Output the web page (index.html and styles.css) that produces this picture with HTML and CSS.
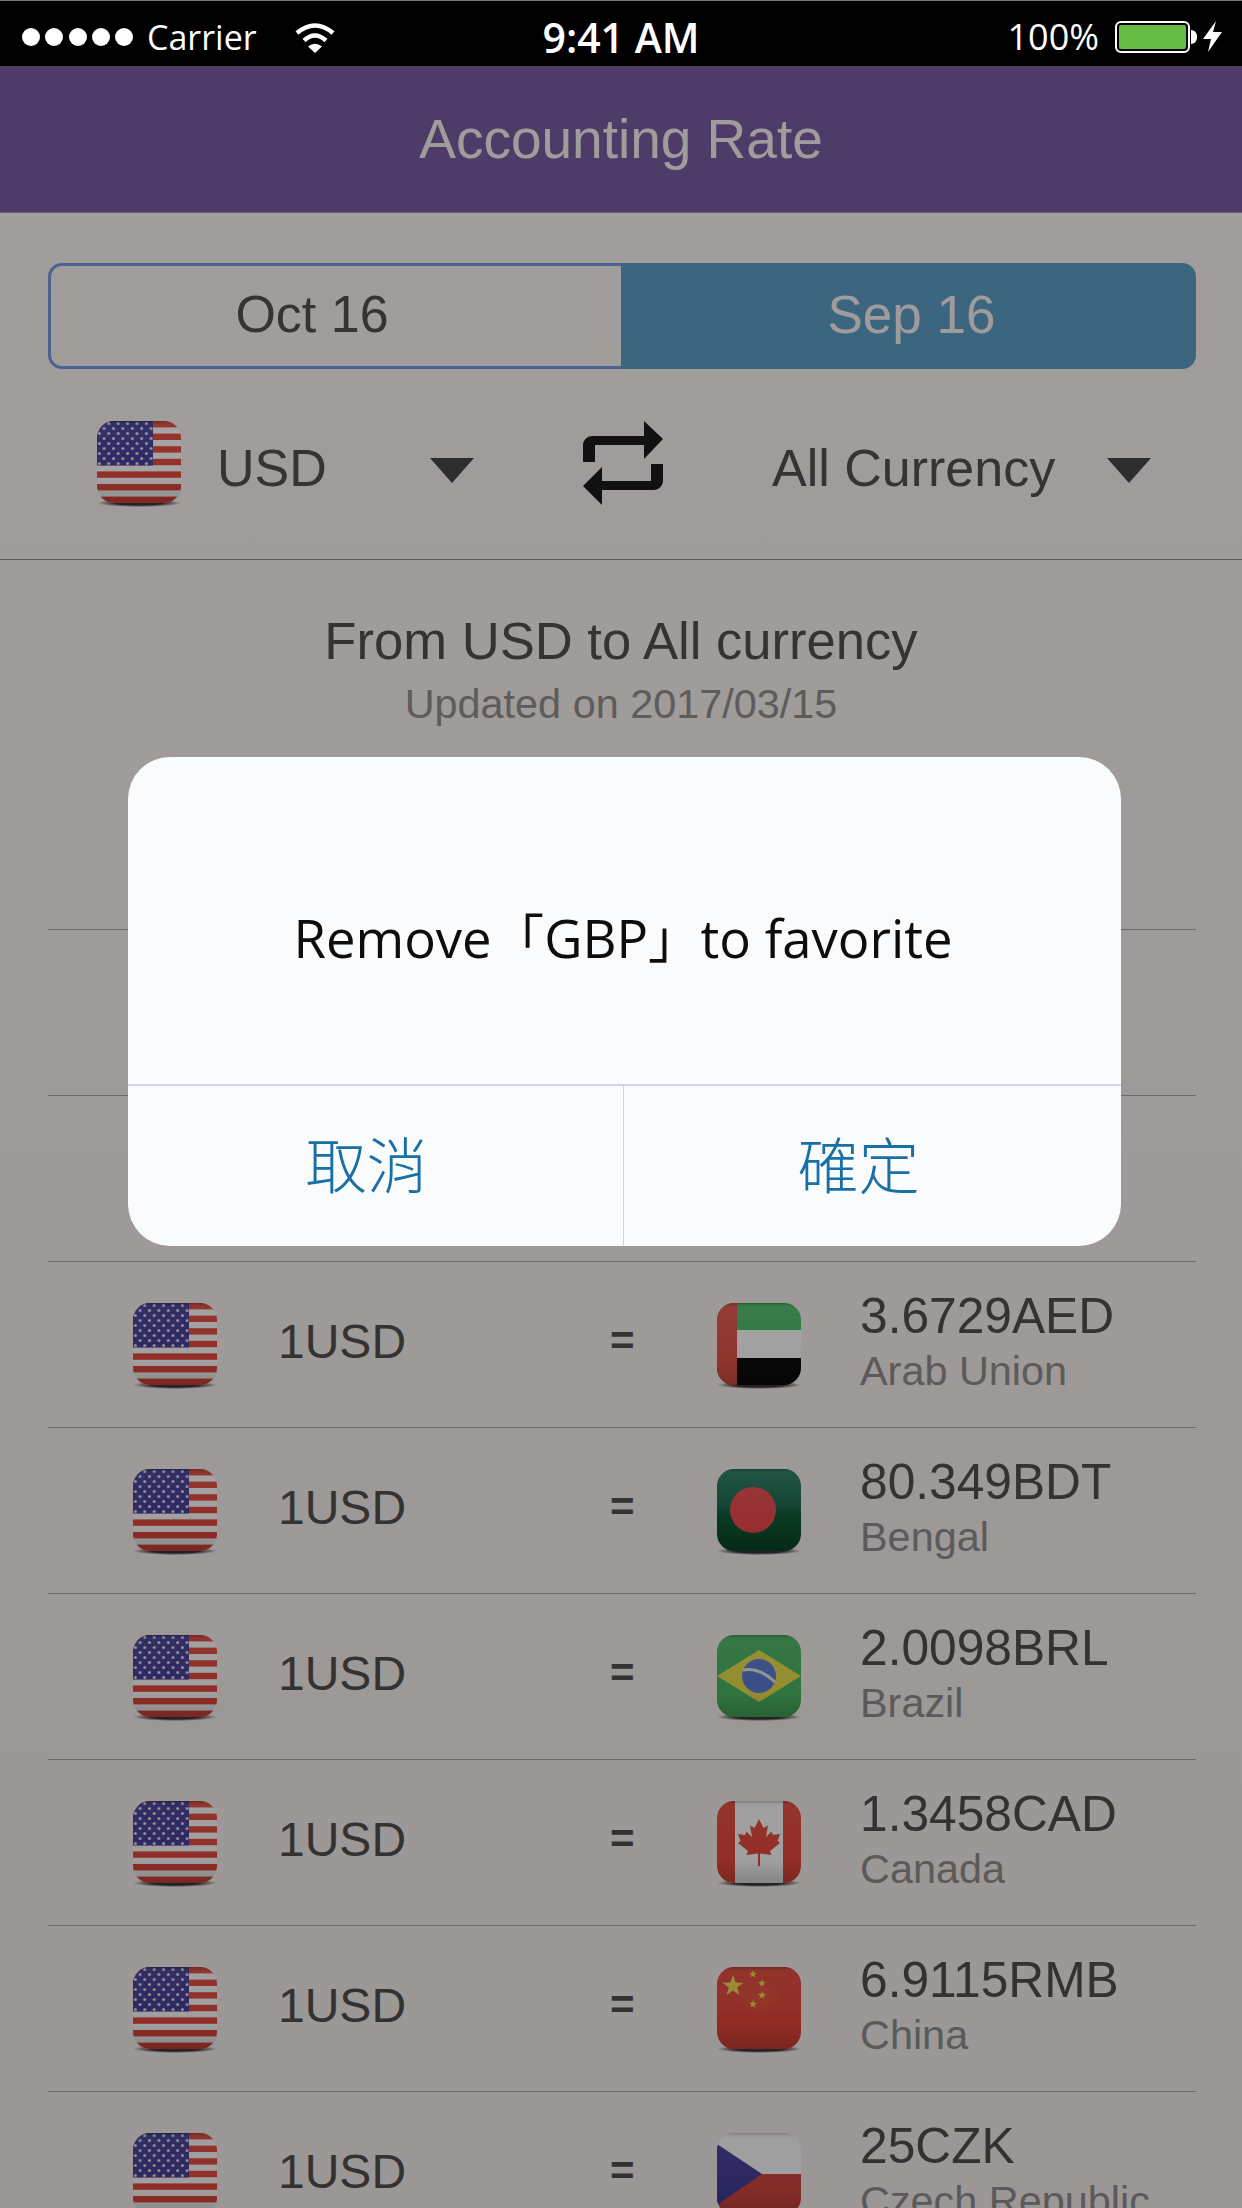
FILE: index.html
```html
<!DOCTYPE html>
<html lang="en">
<head>
  <meta charset="UTF-8">
  <meta name="viewport" content="width=device-width, initial-scale=1.0">
  <title>Accounting Rate</title>
  <link rel="stylesheet" href="styles.css">
</head>
<body>
  <!-- flags, used by every row -->
  <svg class="flag-defs" xmlns="http://www.w3.org/2000/svg">
    <defs>
      <clipPath id="flag-clip"><rect width="84" height="82" rx="17"/></clipPath>
      <linearGradient id="gloss" x1="0" y1="0" x2="0" y2="1">
        <stop offset="0" stop-color="#000" stop-opacity=".22"/>
        <stop offset=".06" stop-color="#fff" stop-opacity=".06"/>
        <stop offset=".5" stop-color="#fff" stop-opacity=".02"/>
        <stop offset=".7" stop-color="#000" stop-opacity="0"/>
        <stop offset="1" stop-color="#000" stop-opacity=".16"/>
      </linearGradient>
      <radialGradient id="shadow-fade">
        <stop offset=".55" stop-color="#222" stop-opacity=".9"/>
        <stop offset="1" stop-color="#222" stop-opacity="0"/>
      </radialGradient>
      <linearGradient id="bd-green" x1="0" y1="0" x2="0" y2="1">
        <stop offset="0" stop-color="#2a7d62"/>
        <stop offset=".45" stop-color="#1c6a4c"/>
        <stop offset=".58" stop-color="#0c5a34"/>
        <stop offset="1" stop-color="#0a4f2c"/>
      </linearGradient>
      <radialGradient id="cn-glow">
        <stop offset="0" stop-color="#ee6a3c" stop-opacity=".45"/>
        <stop offset="1" stop-color="#ee6a3c" stop-opacity="0"/>
      </radialGradient>
      <pattern id="us-stars" width="9.4" height="10" patternUnits="userSpaceOnUse">
        <circle cx="2.4" cy="2.6" r="1.5" fill="#e8e6ee"/>
        <circle cx="7.1" cy="7.6" r="1.5" fill="#e8e6ee"/>
      </pattern>
      <symbol id="flag-shadow" viewBox="0 0 84 86">
        <ellipse cx="42" cy="82" rx="42" ry="4" fill="url(#shadow-fade)"/>
      </symbol>
      <symbol id="flag-us" viewBox="0 0 84 86">
        <use href="#flag-shadow"/>
        <g clip-path="url(#flag-clip)">
          <rect width="84" height="82" fill="#fff"/>
          <g fill="#e5483f">
            <rect y="0" width="84" height="6.4"/>
            <rect y="12.6" width="84" height="6.4"/>
            <rect y="25.2" width="84" height="6.4"/>
            <rect y="37.8" width="84" height="6.4"/>
            <rect y="50.4" width="84" height="6.4"/>
            <rect y="63" width="84" height="6.4"/>
            <rect y="75.6" width="84" height="6.4"/>
          </g>
          <rect width="56" height="44.5" fill="#453e9a"/>
          <rect width="56" height="44.5" fill="url(#us-stars)"/>
          <rect width="84" height="82" fill="url(#gloss)"/>
        </g>
      </symbol>
      <symbol id="flag-ae" viewBox="0 0 84 86">
        <use href="#flag-shadow"/>
        <g clip-path="url(#flag-clip)">
          <rect width="84" height="27" fill="#4dc06c"/>
          <rect y="27" width="84" height="28" fill="#fff"/>
          <rect y="55" width="84" height="27" fill="#0c0c0c"/>
          <rect width="20" height="82" fill="#e5534a"/>
          <rect width="84" height="82" fill="url(#gloss)"/>
        </g>
      </symbol>
      <symbol id="flag-bd" viewBox="0 0 84 86">
        <use href="#flag-shadow"/>
        <g clip-path="url(#flag-clip)">
          <rect width="84" height="82" fill="url(#bd-green)"/>
          <circle cx="36" cy="41" r="23" fill="#f04a50"/>
          <rect width="84" height="82" fill="url(#gloss)"/>
        </g>
      </symbol>
      <symbol id="flag-br" viewBox="0 0 84 86">
        <use href="#flag-shadow"/>
        <g clip-path="url(#flag-clip)">
          <rect width="84" height="82" fill="#4bb863"/>
          <polygon points="0,41 42,15 84,41 42,67" fill="#ebe04b"/>
          <circle cx="42" cy="41" r="17" fill="#5c7bd7"/>
          <path d="M26 35 Q42 32 58 47" fill="none" stroke="#e8ecef" stroke-width="3"/>
          <rect width="84" height="82" fill="url(#gloss)"/>
        </g>
      </symbol>
      <symbol id="flag-ca" viewBox="0 0 84 86">
        <use href="#flag-shadow"/>
        <g clip-path="url(#flag-clip)">
          <rect width="84" height="82" fill="#fff"/>
          <rect width="18" height="82" fill="#e9493c"/>
          <rect x="66" width="18" height="82" fill="#e9493c"/>
          <path fill="#e9493c" d="M42 18 L46.5 27 L51 24.5 L49 36 L54.5 30.5 L56 34 L63 33 L60.5 40 L63 42 L53 50 L54.5 54 L43 52.5 L43 65 L41 65 L41 52.5 L29.5 54 L31 50 L21 42 L23.5 40 L21 33 L28 34 L29.5 30.5 L35 36 L33 24.5 L37.5 27 Z"/>
          <rect width="84" height="82" fill="url(#gloss)"/>
        </g>
      </symbol>
      <symbol id="flag-cn" viewBox="0 0 84 86">
        <use href="#flag-shadow"/>
        <g clip-path="url(#flag-clip)">
          <rect width="84" height="82" fill="#e8463a"/>
          <ellipse cx="42" cy="30" rx="26" ry="16" fill="url(#cn-glow)"/>
          <g fill="#f2dc50">
            <polygon points="16,8 18.6,15.6 26.6,15.7 20.2,20.6 22.5,28.2 16,23.6 9.5,28.2 11.8,20.6 5.4,15.7 13.4,15.6"/>
            <polygon points="36,3 37,5.8 40,5.9 37.6,7.7 38.5,10.6 36,8.9 33.5,10.6 34.4,7.7 32,5.9 35,5.8"/>
            <polygon points="45,12 46,14.8 49,14.9 46.6,16.7 47.5,19.6 45,17.9 42.5,19.6 43.4,16.7 41,14.9 44,14.8"/>
            <polygon points="45,24 46,26.8 49,26.9 46.6,28.7 47.5,31.6 45,29.9 42.5,31.6 43.4,28.7 41,26.9 44,26.8"/>
            <polygon points="36,33 37,35.8 40,35.9 37.6,37.7 38.5,40.6 36,38.9 33.5,40.6 34.4,37.7 32,35.9 35,35.8"/>
          </g>
          <rect width="84" height="82" fill="url(#gloss)"/>
        </g>
      </symbol>
      <symbol id="flag-cz" viewBox="0 0 84 86">
        <use href="#flag-shadow"/>
        <g clip-path="url(#flag-clip)">
          <rect width="84" height="41" fill="#fff"/>
          <rect y="41" width="84" height="41" fill="#d4463f"/>
          <polygon points="0,11 45,41 0,72" fill="#453e9a"/>
          <rect width="84" height="82" fill="url(#gloss)"/>
        </g>
      </symbol>
    </defs>
  </svg>

  <div class="app">
    <div class="status-bar">
      <div class="status-left">
        <span class="signal"><i></i><i></i><i></i><i></i><i></i></span>
        <span class="carrier">Carrier</span>
        <svg class="wifi" width="40" height="32" viewBox="0 0 40 32">
          <path d="M2 12 Q20 -3 38 12" fill="none" stroke="#fff" stroke-width="4.5"/>
          <path d="M9 19.5 Q20 9.5 31 19.5" fill="none" stroke="#fff" stroke-width="4.5"/>
          <path d="M13 25.5 Q20 20 27 25.5 L20 32 Z" fill="#fff"/>
        </svg>
      </div>
      <div class="status-time">9:41 AM</div>
      <div class="status-right">
        <span class="percent">100%</span>
        <span class="battery"><b></b></span>
        <span class="battery-nub"></span>
        <svg class="bolt" width="19" height="31" viewBox="0 0 19 31"><polygon points="13,0 0,18 8,18 5,31 19,11 10,11" fill="#fff"/></svg>
      </div>
    </div>

    <div class="screen">
      <header class="title-bar">Accounting Rate</header>

      <div class="months">
        <div class="month">Oct 16</div>
        <div class="month active">Sep 16</div>
      </div>

      <div class="filter">
        <div class="pick pick-from">
          <svg class="flag"><use href="#flag-us"/></svg>
          <span class="pick-name">USD</span>
          <span class="caret"></span>
        </div>
        <svg class="swap" width="80" height="84" viewBox="0 0 80 84">
          <path fill="#1a1a1a" d="M0 41 V24 a9 9 0 0 1 9 -9 H61 V0 L80 18 L61 38 V24 H12 V41 Z"/>
          <path fill="#1a1a1a" d="M80 43 V60 a9 9 0 0 1 -9 9 H19 V84 L0 65 L19 46 V60 H68 V43 Z"/>
        </svg>
        <div class="pick pick-to">
          <span class="pick-name">All Currency</span>
          <span class="caret"></span>
        </div>
      </div>

      <div class="summary">
        <div class="summary-title">From USD to All currency</div>
        <div class="summary-date">Updated on 2017/03/15</div>
      </div>

      <div class="rates">
        <!-- these sit behind the dialog -->
        <div class="row"></div>
        <div class="row"></div>
        <div class="row"></div>

        <div class="row">
          <svg class="flag"><use href="#flag-us"/></svg>
          <span class="base">1USD</span>
          <span class="equals">=</span>
          <svg class="flag"><use href="#flag-ae"/></svg>
          <div class="rate"><div class="rate-value">3.6729AED</div><div class="rate-name">Arab Union</div></div>
        </div>
        <div class="row">
          <svg class="flag"><use href="#flag-us"/></svg>
          <span class="base">1USD</span>
          <span class="equals">=</span>
          <svg class="flag"><use href="#flag-bd"/></svg>
          <div class="rate"><div class="rate-value">80.349BDT</div><div class="rate-name">Bengal</div></div>
        </div>
        <div class="row">
          <svg class="flag"><use href="#flag-us"/></svg>
          <span class="base">1USD</span>
          <span class="equals">=</span>
          <svg class="flag"><use href="#flag-br"/></svg>
          <div class="rate"><div class="rate-value">2.0098BRL</div><div class="rate-name">Brazil</div></div>
        </div>
        <div class="row">
          <svg class="flag"><use href="#flag-us"/></svg>
          <span class="base">1USD</span>
          <span class="equals">=</span>
          <svg class="flag"><use href="#flag-ca"/></svg>
          <div class="rate"><div class="rate-value">1.3458CAD</div><div class="rate-name">Canada</div></div>
        </div>
        <div class="row">
          <svg class="flag"><use href="#flag-us"/></svg>
          <span class="base">1USD</span>
          <span class="equals">=</span>
          <svg class="flag"><use href="#flag-cn"/></svg>
          <div class="rate"><div class="rate-value">6.9115RMB</div><div class="rate-name">China</div></div>
        </div>
        <div class="row">
          <svg class="flag"><use href="#flag-us"/></svg>
          <span class="base">1USD</span>
          <span class="equals">=</span>
          <svg class="flag"><use href="#flag-cz"/></svg>
          <div class="rate"><div class="rate-value">25CZK</div><div class="rate-name">Czech Republic</div></div>
        </div>
      </div>

      <div class="overlay"></div>

      <div class="dialog">
        <div class="dialog-text">Remove「GBP」to favorite</div>
        <div class="dialog-buttons">
          <div class="dialog-button cancel">取消</div>
          <div class="dialog-button confirm">確定</div>
        </div>
      </div>
    </div>
  </div>
</body>
</html>
```

FILE: styles.css
```css
body {
  margin: 0;
  font-family: "Liberation Sans", Arial, sans-serif;
  color: #52504e;
  background: #f8f2f0;
}
.app {
  width: 1242px;
  height: 2208px;
  overflow: hidden;
  display: flex;
  flex-direction: column;
}
.flag-defs {
  position: absolute;
  width: 0;
  height: 0;
}

/* status bar */
.status-bar {
  height: 59px;
  padding-top: 6px;
  flex: none;
  border-top: 1px solid #777;
  background: #000;
  color: #fff;
  display: grid;
  grid-template-columns: 1fr auto 1fr;
  align-items: center;
  font-family: "Open Sans", "Noto Sans", sans-serif;
}
.status-left {
  display: flex;
  align-items: center;
  padding-left: 22px;
}
.signal {
  display: flex;
  gap: 5.25px;
}
.signal i {
  width: 18px;
  height: 18px;
  border-radius: 50%;
  background: #fff;
}
.carrier {
  font-size: 34px;
  margin-left: 14px;
}
.wifi {
  margin-left: 38px;
}
.status-time {
  font-size: 41px;
  font-weight: 600;
}
.status-right {
  display: flex;
  align-items: center;
  justify-content: flex-end;
  padding-right: 20px;
}
.percent {
  font-size: 36px;
  margin-right: 16px;
}
.battery {
  width: 75px;
  height: 32px;
  box-sizing: border-box;
  border: 2px solid #fff;
  border-radius: 6px;
  padding: 2px;
  display: flex;
}
.battery b {
  flex: 1;
  background: #66bb45;
  border-radius: 2px;
}
.battery-nub {
  width: 6px;
  height: 14px;
  margin-left: 1px;
  background: #fff;
  border-radius: 0 7px 7px 0;
}
.bolt {
  margin-left: 6px;
}

.screen {
  position: relative;
  flex: 1;
  min-height: 0;
}
.title-bar {
  height: 146px;
  border-bottom: 1px solid #a594bb;
  background: #765ca0;
  color: #f6f0ef;
  font-size: 55px;
  line-height: 147px;
  text-align: center;
}

/* month switch */
.months {
  display: flex;
  margin: 50px 46px 0 48px;
  height: 106px;
}
.month {
  flex: 0 0 573px;
  box-sizing: border-box;
  padding-right: 48px;
  border: 3px solid #7298df;
  border-right: 0;
  border-radius: 14px 0 0 14px;
  font-size: 52px;
  line-height: 97px;
  text-align: center;
}
.month.active {
  flex: 1;
  padding: 0 0 0 9px;
  border: 3px solid #5c9dc5;
  border-left: 0;
  border-radius: 0 14px 14px 0;
  background: #5c9dc5;
  color: #f6f0ef;
  font-size: 53px;
}

/* currency picker */
.filter {
  height: 190px;
  display: flex;
  align-items: center;
  padding-left: 97px;
  border-bottom: 1px solid #8e8b89;
}
.flag {
  width: 84px;
  height: 86px;
  flex: none;
}
.pick {
  display: flex;
  align-items: center;
}
.pick-from {
  width: 377px;
  gap: 36px;
}
.pick-to {
  width: 379px;
  margin-left: 109px;
}
.pick-name {
  flex: 1;
  font-size: 52px;
  margin-top: 7px;
}
.caret {
  width: 0;
  height: 0;
  margin-top: 12px;
  border-top: 25px solid #474545;
  border-left: 22.5px solid transparent;
  border-right: 22.5px solid transparent;
}
.swap {
  margin: 0 0 3px 109px;
  flex: none;
}

.summary {
  height: 204px;
  box-sizing: border-box;
  padding-top: 51px;
  text-align: center;
}
.summary-title {
  font-size: 52.6px;
  line-height: 60px;
}
.summary-date {
  font-size: 41.4px;
  line-height: 50px;
  margin-top: 8px;
  color: #928f8e;
}

/* rate list */
.rates {
  margin: 0 46px 0 48px;
}
.row {
  height: 165px;
  border-bottom: 1px solid #aba6a5;
  display: grid;
  grid-template-columns: 145px 332px 107px 143px 1fr;
  align-items: center;
  padding-left: 85px;
}
.row .flag {
  margin-top: 3px;
}
.base {
  font-size: 48px;
  margin-bottom: 7px;
}
.equals {
  font-size: 42px;
  font-weight: bold;
  margin-bottom: 7px;
}
.rate {
  margin-bottom: 5px;
}
.rate-value {
  font-size: 49.7px;
  line-height: 54px;
}
.rate-name {
  font-size: 41.4px;
  line-height: 50px;
  margin-top: 3px;
  color: #928f8e;
}

/* dialog over everything */
.overlay {
  position: absolute;
  inset: 0;
  background: linear-gradient(rgba(0, 0, 0, 0.35), rgba(0, 0, 0, 0.375));
}
.dialog {
  position: absolute;
  top: 691px;
  left: 128px;
  width: 993px;
  height: 489px;
  display: flex;
  flex-direction: column;
  background: #f9fbfd;
  border-radius: 42px;
  font-family: "Open Sans", "Noto Sans CJK TC", sans-serif;
}
.dialog-text {
  flex: 1;
  display: flex;
  align-items: center;
  justify-content: center;
  padding: 28px 3px 0 0;
  color: #0d0d0d;
  font-size: 52.6px;
}
.dialog-buttons {
  height: 160px;
  display: flex;
  border-top: 2px solid #ccd6e8;
}
.dialog-button {
  display: flex;
  align-items: center;
  justify-content: center;
  box-sizing: border-box;
  padding-bottom: 8px;
  font-family: "Noto Sans CJK TC", sans-serif;
  font-size: 61px;
  font-weight: 300;
  color: #1a6fa5;
}
.cancel {
  flex: 0 0 495px;
  padding-right: 18px;
}
.confirm {
  flex: 1;
  padding-right: 28px;
  border-left: 1px solid #ccd6e8;
}
```
